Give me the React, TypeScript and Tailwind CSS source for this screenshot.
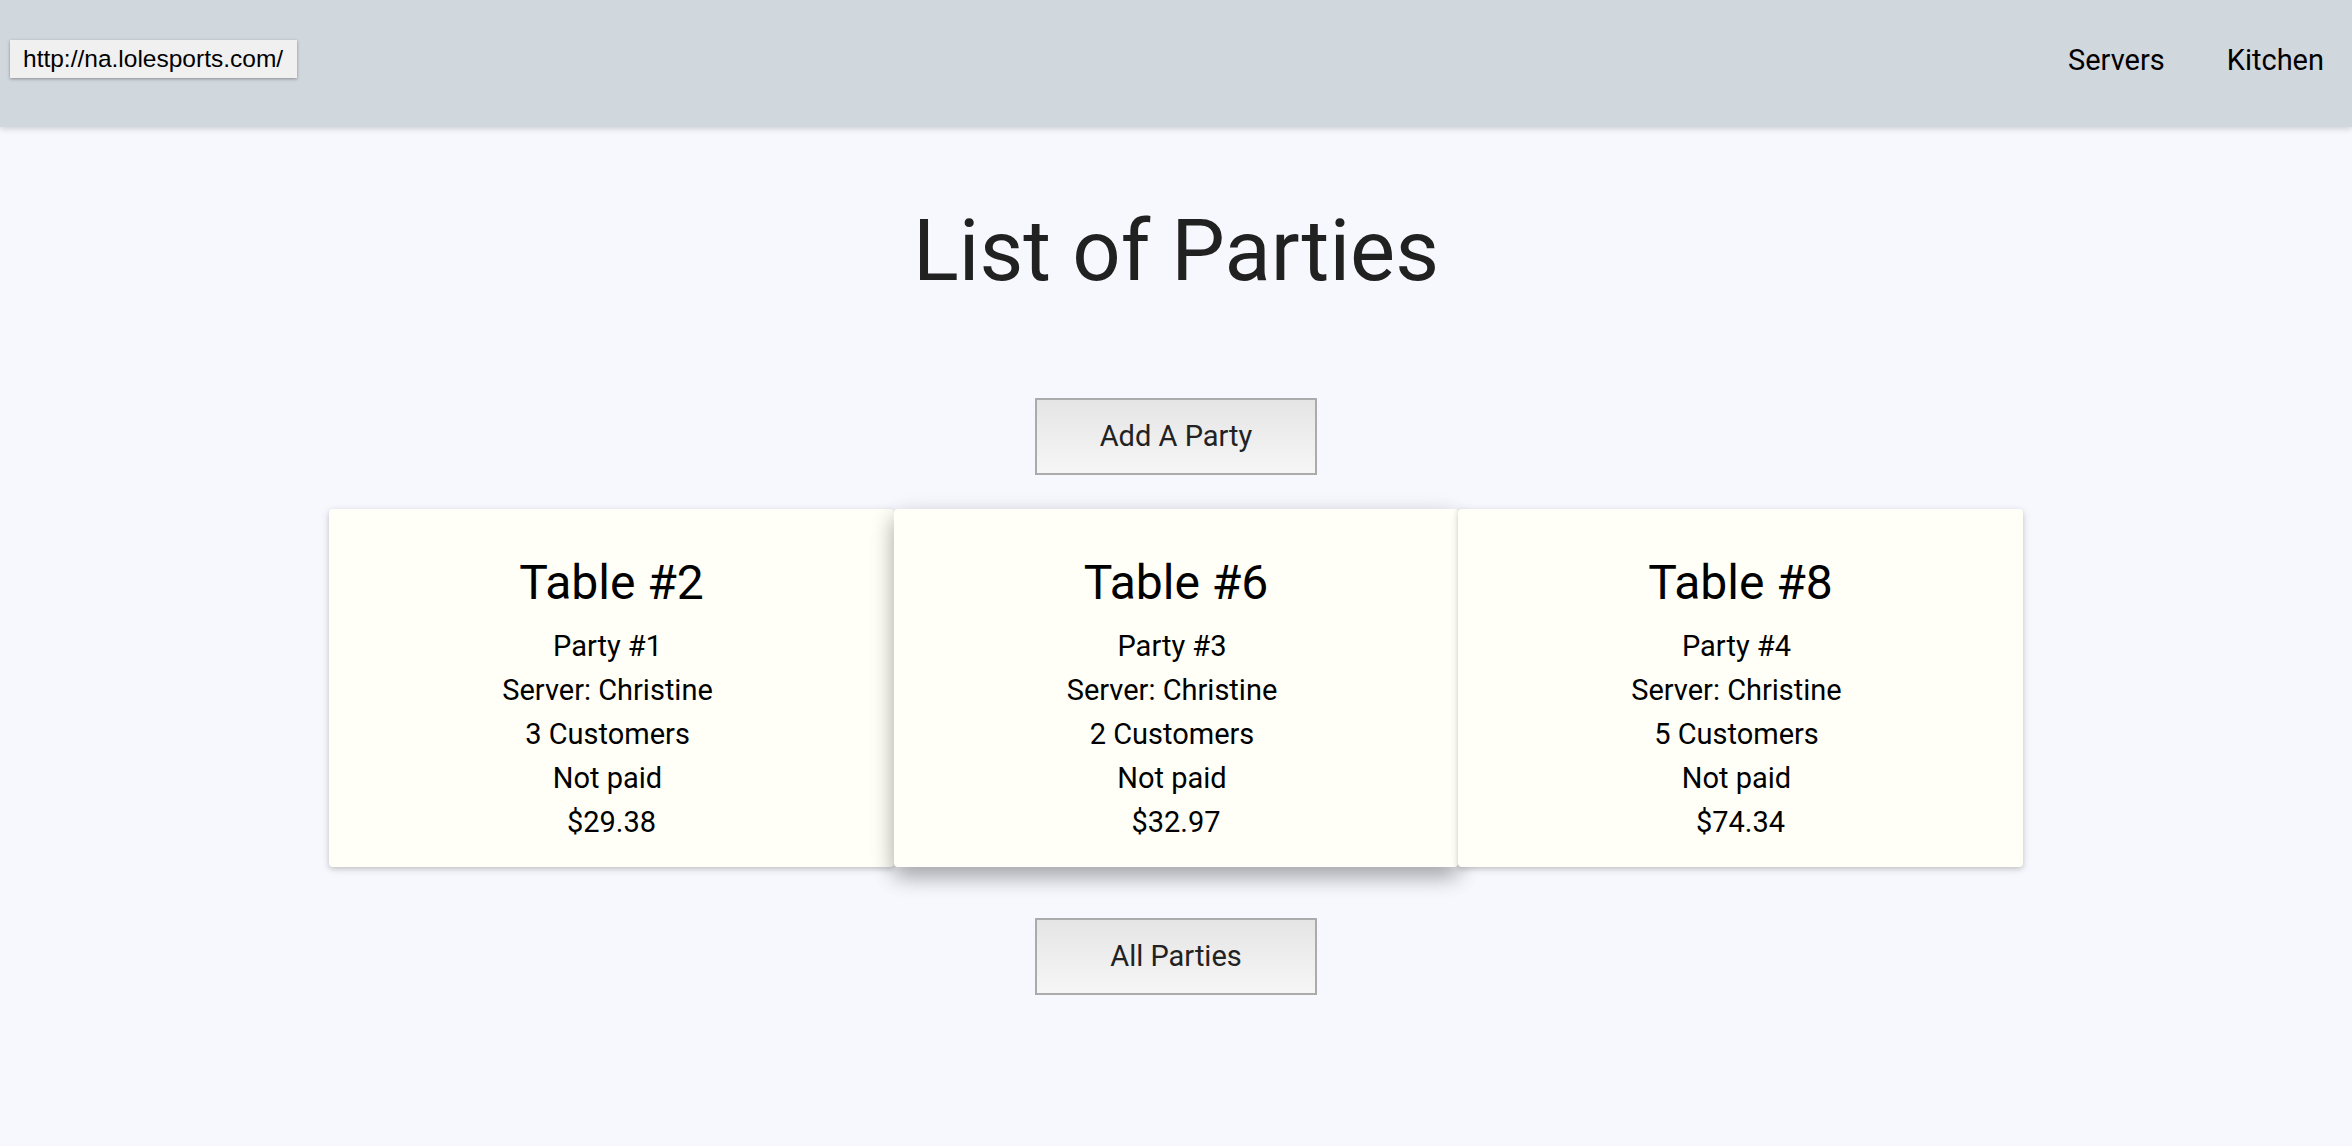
import React from 'react';

interface Party {
  table: number;
  party: number;
  server: string;
  customers: number;
  paid: boolean;
  total: string;
  raised?: boolean;
}

const PARTIES: Party[] = [
  { table: 2, party: 1, server: 'Christine', customers: 3, paid: false, total: '$29.38' },
  { table: 6, party: 3, server: 'Christine', customers: 2, paid: false, total: '$32.97', raised: true },
  { table: 8, party: 4, server: 'Christine', customers: 5, paid: false, total: '$74.34' },
];

function GreyButton({ label }: { label: string }) {
  return (
    <button className="w-[282px] h-[77px] border-2 border-[#ababab] bg-gradient-to-b from-[#e5e5e5] to-[#f6f6f6] text-[29px] text-[#222222] flex items-center justify-center">
      {label}
    </button>
  );
}

function PartyCard({ p }: { p: Party }) {
  return (
    <div
      className={
        p.raised
          ? 'w-[24%] rounded-[4px] bg-[#fffff7] pt-[46px] pb-[23px] text-center text-black shadow-[0_10px_20px_0_rgba(0,0,0,0.22),0_8px_26px_0_rgba(0,0,0,0.16)]'
          : 'w-[24%] rounded-[4px] bg-[#fffff7] pt-[46px] pb-[23px] text-center text-black shadow-[0_2px_5px_0_rgba(0,0,0,0.14),0_2px_10px_0_rgba(0,0,0,0.10)]'
      }
    >
      <h2 className="text-[48px] leading-[56px]">Table #{p.table}</h2>
      <div className="mt-[13px] text-[29px] leading-[44px]">
        <p className="pr-[8px]">Party #{p.party}</p>
        <p className="pr-[8px]">Server: {p.server}</p>
        <p className="pr-[8px]">{p.customers} Customers</p>
        <p className="pr-[8px]">{p.paid ? 'Paid' : 'Not paid'}</p>
        <p>{p.total}</p>
      </div>
    </div>
  );
}

export default function App() {
  return (
    <div className="min-h-screen bg-[#f7f8fd] font-['Roboto',sans-serif]">
      <header className="relative z-10 h-[127px] bg-[#d0d7dd] shadow-[0_2px_6px_0_rgba(0,0,0,0.16)]">
        <div className="absolute left-[10px] top-[40px] h-[38px] w-[287px] flex items-center pl-[13px] bg-[#f0f0f0] shadow-[0_1px_3px_rgba(0,0,0,0.35)] font-['Liberation_Sans',Arial,sans-serif] text-[24.5px] text-black">
          http://na.lolesports.com/
        </div>
        <nav className="h-full flex items-center justify-end gap-[62px] pr-[28px] pb-[5px] text-[29px] text-black">
          <a>Servers</a>
          <a>Kitchen</a>
        </nav>
      </header>

      <main className="flex flex-col items-center">
        <h1 className="mt-[74px] text-[85px] leading-[101px] text-[#212121]">List of Parties</h1>

        <div className="mt-[96px]">
          <GreyButton label="Add A Party" />
        </div>

        <div className="mt-[34px] w-full flex justify-center">
          {PARTIES.map((p) => (
            <PartyCard key={p.party} p={p} />
          ))}
        </div>

        <div className="mt-[51px]">
          <GreyButton label="All Parties" />
        </div>
      </main>
    </div>
  );
}
